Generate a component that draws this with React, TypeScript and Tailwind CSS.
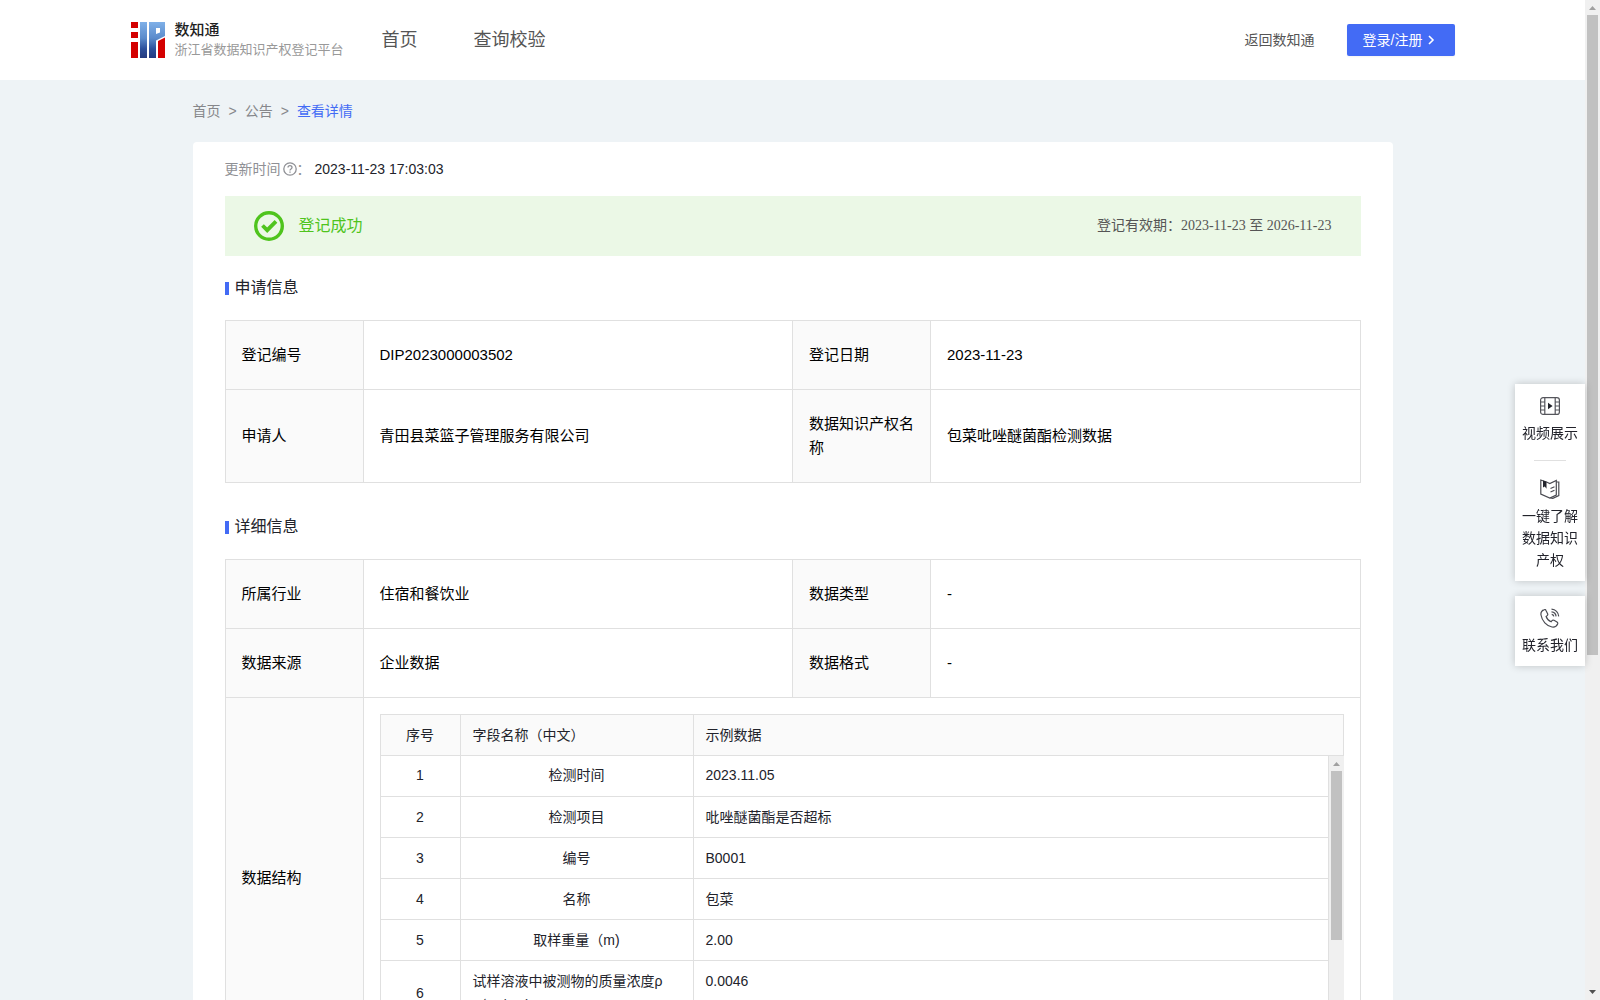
import type { ReactNode } from "react";

const fields = [
  ["检测时间", "2023.11.05"],
  ["检测项目", "吡唑醚菌酯是否超标"],
  ["编号", "B0001"],
  ["名称", "包菜"],
  ["取样重量（m)", "2.00"],
];

function Logo() {
  return (
    <svg className="h-9 w-[34px] shrink-0" viewBox="0 0 34 36" aria-hidden="true">
      <defs>
        <linearGradient id="blue" x1="0" y1="0" x2="0" y2="1">
          <stop offset="0" stopColor="#7fb0e8" />
          <stop offset="0.45" stopColor="#5b8bcb" />
          <stop offset="0.75" stopColor="#2c4f9a" />
          <stop offset="1" stopColor="#243a80" />
        </linearGradient>
      </defs>
      <path fill="#d40000" d="M0 0h7v6H0zM0 10h7v6H0zM0 20h7v16H0zM27 19l7-3.500v20.500h-7z" />
      <path
        fill="url(#blue)"
        fillRule="evenodd"
        d="M9 0h7v36H9zM18 0h16v14l-9 4.500V36h-7zM25 6v6l4-1.500V6z"
      />
    </svg>
  );
}

function HelpIcon() {
  return (
    <svg className="h-3.5 w-3.5" viewBox="0 0 14 14" fill="none" stroke="#8f9095" strokeWidth="1.300">
      <circle cx="7" cy="7" r="6.200" />
      <path d="M5 5.600C5 3 9 3 9 5.500 9 7 7 6.900 7 8.500M7 9.600v1.200" />
    </svg>
  );
}

function SuccessIcon() {
  return (
    <svg className="h-[30px] w-[30px]" viewBox="0 0 30 30" fill="none" stroke="#4fc41d">
      <circle cx="15" cy="15" r="13.300" strokeWidth="3.400" />
      <path d="M8.500 14.500l4.700 4.700 8.800-8.800" strokeWidth="3.800" />
    </svg>
  );
}

function VideoIcon() {
  return (
    <svg className="h-5 w-5" viewBox="0 0 20 20" fill="none" stroke="#55565c" strokeWidth="1.200">
      <rect x="0.600" y="1.600" width="18.800" height="16.800" rx="2.500" />
      <path d="M4.800 1.600v16.800M15.200 1.600v16.800M.6 6h4.200M.6 10h4.200M.6 14h4.200M15.200 6h4.200M15.200 10h4.200M15.200 14h4.200" />
      <path d="M8 6.800v6.400l4.600-3.200z" fill="#22232b" stroke="none" />
    </svg>
  );
}

function BookIcon() {
  return (
    <svg className="h-5 w-5" viewBox="0 0 20 20" fill="none" stroke="#4a4b52" strokeWidth="1.200">
      <path d="M.8 1v14l9 4 6.500-3V1.500l-6.500 3L6.500 3z" />
      <path d="M16.300 3h2.500v13.500l-6 2.900-2.500-.6M10.500 9.500l4-1.800M10.500 13l4-1.800" />
      <path d="M3 1.500l3.500 1.300v7L4.800 7.600 3 8.500z" fill="#22232b" stroke="none" />
    </svg>
  );
}

function PhoneIcon() {
  return (
    <svg className="h-5 w-5" viewBox="0 0 20 20" fill="none" stroke="#4a4b52" strokeWidth="1.200">
      <path d="M4.300 1.600C2 2.500.6 4.500 1 7c1 6 5.500 11 11 12 2.500.4 4.700-.8 5.600-3 .3-.8.100-1.500-.6-2l-3-1.700c-.8-.4-1.500-.2-2 .4l-.9 1c-2.200-.8-4.200-3-5-5.200l1.100-.9c.6-.5.700-1.200.4-1.900L6 2.400c-.3-.8-1-1.100-1.700-.8z" />
      <path d="M11.500 1.200c4 .2 7 3.200 7.200 7.200M11.500 3.800c2.600.2 4.400 2 4.600 4.600M11.700 6.300c1.200.2 1.900.9 2.100 2.100" />
    </svg>
  );
}

function ArrowUp() {
  return (
    <svg className="h-[15px] w-[15px]" viewBox="0 0 15 15">
      <path d="M4 10h7L7.500 6z" fill="#a0a0a0" />
    </svg>
  );
}

function ArrowDown() {
  return (
    <svg className="h-[15px] w-[15px]" viewBox="0 0 15 15">
      <path d="M4 5h7L7.500 9z" fill="#505050" />
    </svg>
  );
}

function SectionTitle({ children }: { children: ReactNode }) {
  return (
    <h2 className="flex h-16 items-center gap-1.5 text-base text-[#22232b]">
      <span className="h-[13px] w-1 bg-[#436bf5]" />
      {children}
    </h2>
  );
}

function Label({ children }: { children: ReactNode }) {
  return (
    <th scope="row" className="border border-[#e0e0e0] bg-[#fafafa] px-4 text-left font-normal">
      {children}
    </th>
  );
}

function Value({ children }: { children: ReactNode }) {
  return <td className="border border-[#e0e0e0] px-4">{children}</td>;
}

function InfoTable({ children }: { children: ReactNode }) {
  return (
    <table className="w-full table-fixed border-collapse text-[15px] leading-6 text-black">
      <colgroup>
        <col className="w-[138px]" />
        <col />
        <col className="w-[138px]" />
        <col />
      </colgroup>
      <tbody>{children}</tbody>
    </table>
  );
}

function FieldColumns() {
  return (
    <colgroup>
      <col className="w-20" />
      <col className="w-[233px]" />
      <col />
    </colgroup>
  );
}

function FieldTable() {
  return (
    <div className="flex h-[328px] flex-col text-sm leading-6 text-[#22232b]">
      <table className="w-full table-fixed border-collapse">
        <FieldColumns />
        <thead>
          <tr className="h-[41px] bg-[#fafafa]">
            <th className="border border-[#e0e0e0] text-center font-normal">序号</th>
            <th className="border border-[#e0e0e0] px-3 text-left font-normal">字段名称（中文）</th>
            <th className="border border-[#e0e0e0] px-3 text-left font-normal">示例数据</th>
          </tr>
        </thead>
      </table>
      <div className="flex min-h-0 flex-1">
        <div className="min-w-0 flex-1 overflow-hidden">
          <table className="-mt-px w-full table-fixed border-collapse">
            <FieldColumns />
            <tbody>
              {fields.map(([name, sample], i) => (
                <tr key={name} className="h-[41px]">
                  <td className="border border-t-0 border-[#e0e0e0] text-center">{i + 1}</td>
                  <td className="border border-t-0 border-[#e0e0e0] px-3 text-center">{name}</td>
                  <td className="border border-t-0 border-[#e0e0e0] px-3">{sample}</td>
                </tr>
              ))}
              <tr className="h-[65px]">
                <td className="border border-t-0 border-[#e0e0e0] text-center">6</td>
                <td className="border border-t-0 border-[#e0e0e0] px-3 py-2">
                  试样溶液中被测物的质量浓度ρ（ug/mL)
                </td>
                <td className="border border-t-0 border-[#e0e0e0] px-3 py-2 align-top">0.0046</td>
              </tr>
            </tbody>
          </table>
        </div>
        <div className="flex w-[15px] flex-col items-center bg-[#f0f0f0]">
          <ArrowUp />
          <div className="h-[169px] w-[11px] bg-[#c1c1c1]" />
        </div>
      </div>
    </div>
  );
}

function SideItem({ icon, children }: { icon: ReactNode; children: ReactNode }) {
  return (
    <button className="flex w-full flex-col items-center gap-1.5 px-1.5 text-sm leading-[22px]">
      {icon}
      {children}
    </button>
  );
}

export default function App() {
  return (
    <div className="flex h-screen overflow-hidden bg-[#eef3f6] font-['Liberation_Sans','Noto_Sans_CJK_SC',sans-serif]">
      <div className="min-w-0 flex-1 overflow-hidden">
        <header className="bg-white">
          <div className="mx-auto flex h-20 max-w-[1324px] items-center">
            <a href="#" className="flex items-center gap-2.5">
              <Logo />
              <span className="flex flex-col">
                <span className="text-[15px] leading-5 font-medium text-[#1f1f1f]">数知通</span>
                <span className="text-[13px] leading-5 text-[#999]">浙江省数据知识产权登记平台</span>
              </span>
            </a>
            <nav className="ml-[38px] flex gap-14 text-lg text-[#555]">
              <a href="#">首页</a>
              <a href="#">查询校验</a>
            </nav>
            <a href="#" className="ml-auto text-sm text-[#555]">
              返回数知通
            </a>
            <button className="ml-8 flex h-8 w-[108px] items-center gap-1 rounded-xs bg-[#436bf5] pl-4 text-sm text-white shadow-xs">
              登录/注册
              <svg className="h-3 w-3" viewBox="0 0 12 12" fill="none" stroke="white" strokeWidth="1.600">
                <path d="M3 2l4 4-4 4" />
              </svg>
            </button>
          </div>
        </header>

        <main className="mx-auto max-w-[1200px]">
          <nav className="flex h-[62px] items-center gap-2 text-sm text-[#86878b]">
            <a href="#">首页</a>
            <span>&gt;</span>
            <a href="#">公告</a>
            <span>&gt;</span>
            <a href="#" className="text-[#436bf5]">
              查看详情
            </a>
          </nav>

          <div className="rounded bg-white px-8 pb-8">
            <div className="flex h-[54px] items-center text-sm text-[#8f9095]">
              更新时间
              <span className="ml-0.5">
                <HelpIcon />
              </span>
              <span>：</span>
              <span className="ml-1 text-[#22232b]">2023-11-23 17:03:03</span>
            </div>

            <div className="flex h-[60px] items-center bg-[#ebf8e6] px-[29px]">
              <SuccessIcon />
              <span className="ml-[15px] text-base text-[#4fc41d]">登记成功</span>
              <span className="ml-auto font-['Liberation_Serif','Noto_Sans_CJK_SC',serif] text-sm text-[#555]">
                登记有效期：2023-11-23 至 2026-11-23
              </span>
            </div>

            <SectionTitle>申请信息</SectionTitle>
            <InfoTable>
              <tr className="h-[69px]">
                <Label>登记编号</Label>
                <Value>DIP2023000003502</Value>
                <Label>登记日期</Label>
                <Value>2023-11-23</Value>
              </tr>
              <tr className="h-[93px]">
                <Label>申请人</Label>
                <Value>青田县菜篮子管理服务有限公司</Value>
                <Label>数据知识产权名称</Label>
                <Value>包菜吡唑醚菌酯检测数据</Value>
              </tr>
            </InfoTable>

            <div className="h-3" />
            <SectionTitle>详细信息</SectionTitle>
            <InfoTable>
              <tr className="h-[69px]">
                <Label>所属行业</Label>
                <Value>住宿和餐饮业</Value>
                <Label>数据类型</Label>
                <Value>-</Value>
              </tr>
              <tr className="h-[69px]">
                <Label>数据来源</Label>
                <Value>企业数据</Value>
                <Label>数据格式</Label>
                <Value>-</Value>
              </tr>
              <tr>
                <Label>数据结构</Label>
                <td colSpan={3} className="border border-[#e0e0e0] p-4">
                  <FieldTable />
                </td>
              </tr>
            </InfoTable>
          </div>
        </main>
      </div>

      <aside className="fixed top-96 right-[15px] flex w-[70px] flex-col gap-[15px] text-[#22232b]">
        <div className="flex flex-col items-center bg-white pt-3 pb-2.5 shadow-[0_0_8px_rgba(0,0,0,0.2)]">
          <SideItem icon={<VideoIcon />}>视频展示</SideItem>
          <div className="mt-4 mb-[18px] h-px w-8 bg-[#e0e0e0]" />
          <SideItem icon={<BookIcon />}>一键了解数据知识产权</SideItem>
        </div>
        <div className="bg-white pt-3 pb-2.5 shadow-[0_0_8px_rgba(0,0,0,0.2)]">
          <SideItem icon={<PhoneIcon />}>联系我们</SideItem>
        </div>
      </aside>

      <div className="flex w-[15px] flex-col items-center bg-[#f0f0f0]">
        <ArrowUp />
        <div className="h-[64%] w-[11px] bg-[#c1c1c1]" />
        <div className="mt-auto">
          <ArrowDown />
        </div>
      </div>
    </div>
  );
}
